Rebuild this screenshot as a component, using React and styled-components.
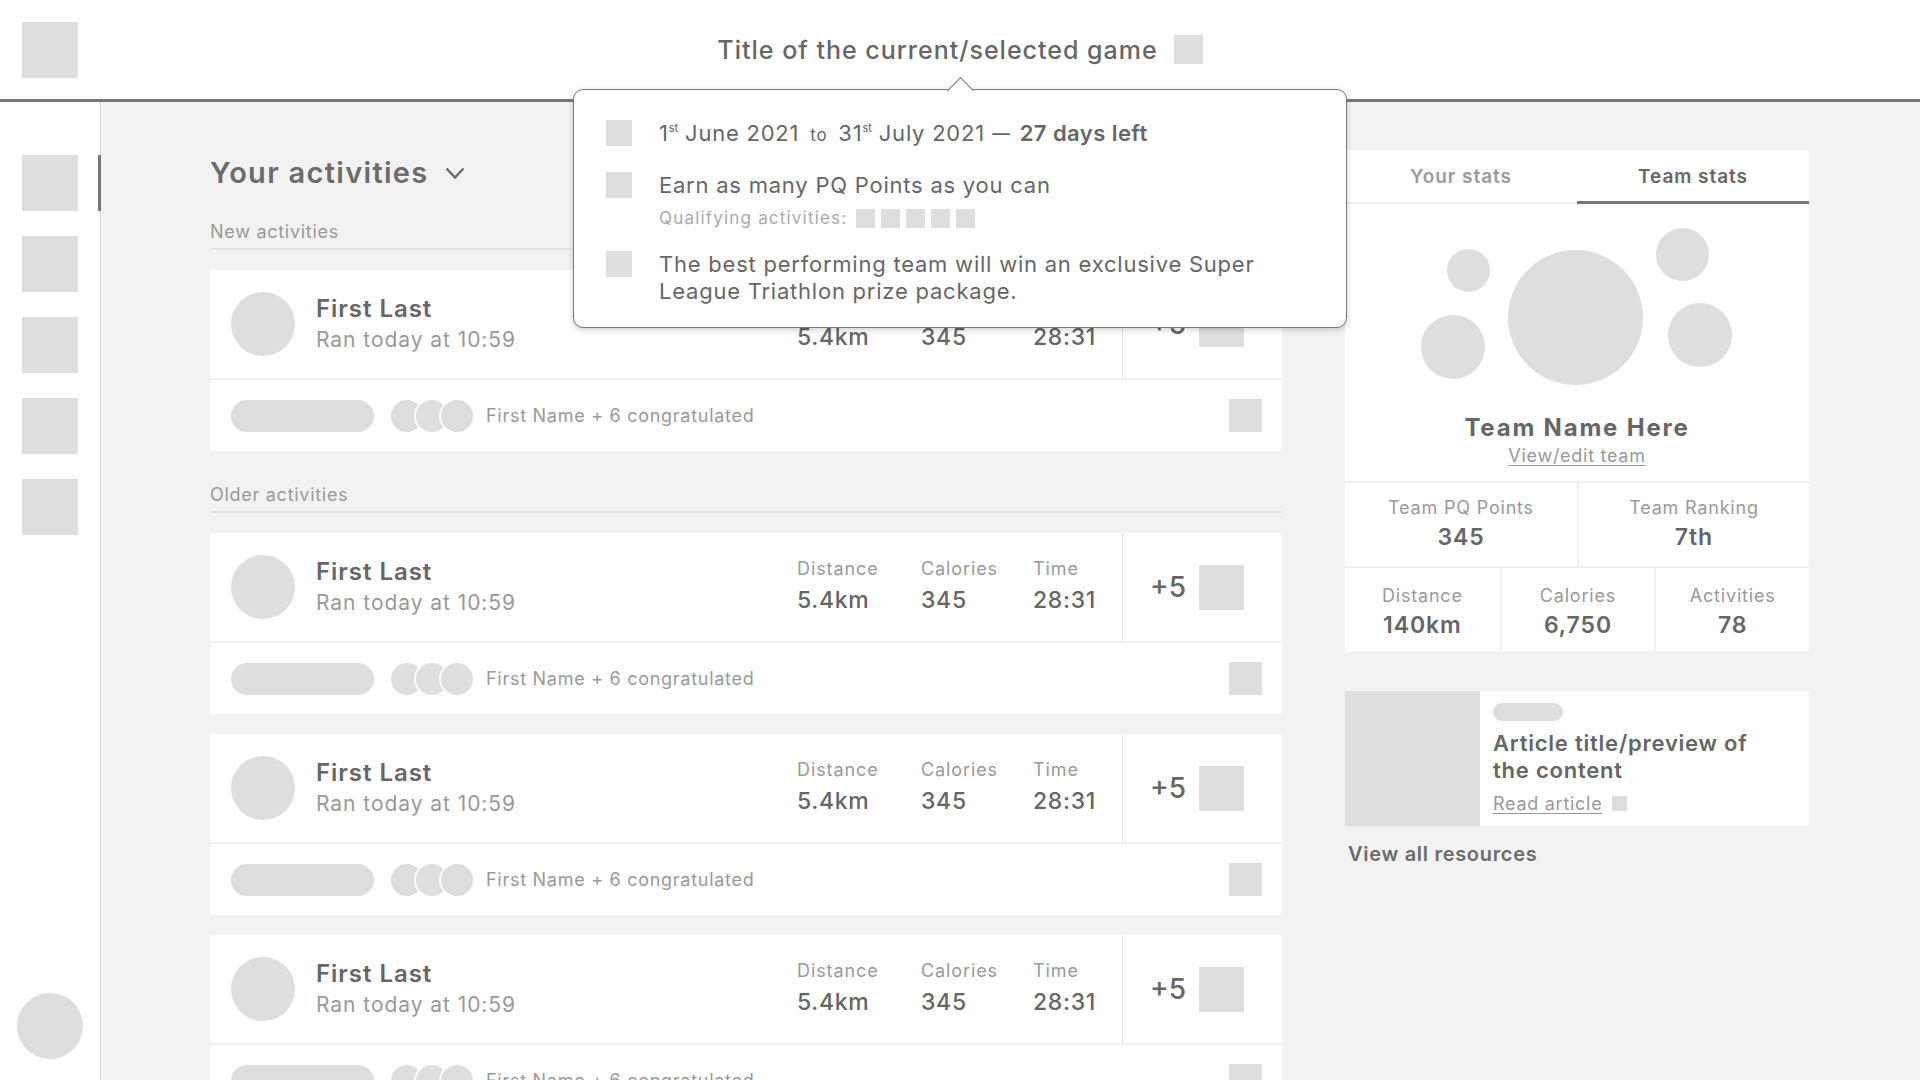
import React from "react";
import styled, { createGlobalStyle } from "styled-components";

const GlobalStyle = createGlobalStyle`
  * { box-sizing: border-box; }
  body {
    margin: 0;
    background: #f2f2f2;
    font-family: Inter, "Open Sans", Arial, sans-serif;
    color: #666;
    overflow: hidden;
  }
`;

const cards = [
  { id: 1, section: "new" },
  { id: 2, section: "old" },
  { id: 3, section: "old" },
  { id: 4, section: "old" },
];

const teamStats = [
  { label: "Distance", value: "140km" },
  { label: "Calories", value: "6,750" },
  { label: "Activities", value: "78" },
];

export default function App() {
  const renderCard = (item) => (
    <Card key={item.id}>
      <CardMain>
        <Avatar />
        <Who>
          <Name>First Last</Name>
          <Sub>Ran today at 10:59</Sub>
        </Who>
        <Stats>
          <div>
            <StatLabel>Distance</StatLabel>
            <StatValue>5.4km</StatValue>
          </div>
          <div>
            <StatLabel>Calories</StatLabel>
            <StatValue>345</StatValue>
          </div>
          <div>
            <StatLabel>Time</StatLabel>
            <StatValue>28:31</StatValue>
          </div>
        </Stats>
        <Points>
          <span>+5</span>
          <Block size={45} />
        </Points>
      </CardMain>
      <CardFoot>
        <Pill />
        <Faces>
          <Face />
          <Face />
          <Face />
        </Faces>
        <Congrats>First Name + 6 congratulated</Congrats>
        <Block size={33} />
      </CardFoot>
    </Card>
  );

  return (
    <>
      <GlobalStyle />
      <Page>
        <Header>
          <Block size={56} />
          <TitleGroup>
            <Title>Title of the current/selected game</Title>
            <Block size={29} />
          </TitleGroup>
          <div />
          <Popover>
            <PopRow>
              <Block size={26} />
              <PopText>
                1<sup>st</sup> June 2021 <small>to</small> 31<sup>st</sup> July 2021
                <Dash>—</Dash>
                <b>27 days left</b>
              </PopText>
            </PopRow>
            <PopRow>
              <Block size={26} />
              <div>
                <PopText>Earn as many PQ Points as you can</PopText>
                <Qualify>
                  <span>Qualifying activities:</span>
                  <Block size={19} />
                  <Block size={19} />
                  <Block size={19} />
                  <Block size={19} />
                  <Block size={19} />
                </Qualify>
              </div>
            </PopRow>
            <PopRow>
              <Block size={26} />
              <PopText>
                The best performing team will win an exclusive Super
                <br />
                League Triathlon prize package.
              </PopText>
            </PopRow>
          </Popover>
        </Header>

        <Body>
          <Sidebar>
            <NavIcon active />
            <NavIcon />
            <NavIcon />
            <NavIcon />
            <NavIcon />
            <Me />
          </Sidebar>

          <Main>
            <Activities>
              <Heading>
                Your activities
                <svg width="20" height="13" viewBox="0 0 20 13">
                  <polyline
                    points="1.5,1.5 10,10.5 18.5,1.5"
                    fill="none"
                    stroke="#6b6b6b"
                    strokeWidth="2.4"
                  />
                </svg>
              </Heading>
              <Section>
                <SectionLabel>New activities</SectionLabel>
                {cards.filter((c) => c.section === "new").map(renderCard)}
              </Section>
              <Section>
                <SectionLabel>Older activities</SectionLabel>
                {cards.filter((c) => c.section === "old").map(renderCard)}
              </Section>
            </Activities>

            <Aside>
              <StatsCard>
                <Tabs>
                  <Tab>Your stats</Tab>
                  <Tab active>Team stats</Tab>
                </Tabs>
                <Team>
                  <Cluster>
                    <Bubble d={135} x={163} y={46} />
                    <Bubble d={43} x={102} y={45} />
                    <Bubble d={64} x={76} y={111} />
                    <Bubble d={53} x={311} y={24} />
                    <Bubble d={64} x={323} y={99} />
                  </Cluster>
                  <TeamName>Team Name Here</TeamName>
                  <Underlined>View/edit team</Underlined>
                </Team>
                <StatGrid cols={2}>
                  <Cell>
                    <CellLabel>Team PQ Points</CellLabel>
                    <CellValue>345</CellValue>
                  </Cell>
                  <Cell>
                    <CellLabel>Team Ranking</CellLabel>
                    <CellValue>7th</CellValue>
                  </Cell>
                </StatGrid>
                <StatGrid cols={3} lower>
                  {teamStats.map((s) => (
                    <Cell key={s.label}>
                      <CellLabel>{s.label}</CellLabel>
                      <CellValue>{s.value}</CellValue>
                    </Cell>
                  ))}
                </StatGrid>
              </StatsCard>

              <Article>
                <Thumb />
                <ArticleBody>
                  <Tag />
                  <ArticleTitle>
                    Article title/preview of
                    <br />
                    the content
                  </ArticleTitle>
                  <ReadRow>
                    <Underlined>Read article</Underlined>
                    <Block size={15} />
                  </ReadRow>
                </ArticleBody>
              </Article>
              <ViewAll>View all resources</ViewAll>
            </Aside>
          </Main>
        </Body>
      </Page>
    </>
  );
}

const Page = styled.div`
  height: 100vh;
  overflow: hidden;
`;

const Block = styled.div`
  width: ${(p) => p.size}px;
  height: ${(p) => p.size}px;
  flex: none;
  background: #dedede;
`;

const Header = styled.header`
  position: relative;
  z-index: 2;
  height: 102px;
  background: #fff;
  border-bottom: 3px solid #777;
  display: grid;
  grid-template-columns: 1fr auto 1fr;
  align-items: center;
  padding: 0 22px;
`;

const TitleGroup = styled.div`
  display: flex;
  align-items: center;
  gap: 16px;
`;

const Title = styled.h1`
  margin: 0;
  font-size: 25px;
  line-height: 32px;
  font-weight: 500;
  letter-spacing: 0.04em;
  color: #666;
`;

const Popover = styled.div`
  position: absolute;
  top: 89px;
  left: 50%;
  margin-left: -387px;
  width: 774px;
  height: 239px;
  background: #fff;
  border: 1px solid #777;
  border-radius: 10px;
  box-shadow: 0 2px 6px rgba(0, 0, 0, 0.18);
  padding: 30px 32px 0;

  &::before {
    content: "";
    position: absolute;
    top: -9px;
    left: calc(50% - 9px);
    width: 18px;
    height: 18px;
    background: #fff;
    border-top: 1px solid #777;
    border-left: 1px solid #777;
    transform: rotate(45deg);
  }
`;

const PopRow = styled.div`
  display: flex;
  gap: 27px;
  margin-bottom: 23px;
`;

const PopText = styled.div`
  font-size: 22px;
  line-height: 27px;
  letter-spacing: 0.035em;
  color: #666;

  sup {
    font-size: 11px;
    vertical-align: 9px;
    line-height: 0;
    letter-spacing: 0;
  }
  small {
    font-size: 17px;
    margin: 0 4px;
  }
  b {
    font-weight: 600;
    letter-spacing: 0.02em;
  }
`;

const Dash = styled.span`
  display: inline-block;
  margin: 0 7px 0 5px;
  transform: scaleX(0.8);
`;

const Qualify = styled.div`
  display: flex;
  align-items: center;
  gap: 6px;
  margin-top: 9px;
  font-size: 17px;
  line-height: 20px;
  letter-spacing: 0.07em;
  color: #aaa;

  span {
    margin-right: 3px;
  }
`;

const Body = styled.div`
  display: flex;
  height: calc(100vh - 102px);
`;

const Sidebar = styled.nav`
  width: 101px;
  flex: none;
  background: #fff;
  border-right: 1px solid #cfcfcf;
  display: flex;
  flex-direction: column;
  align-items: center;
  gap: 25px;
  padding: 53px 0 21px;
`;

const NavIcon = styled.div`
  position: relative;
  width: 56px;
  height: 56px;
  background: #dedede;

  &::after {
    content: "";
    display: ${(p) => (p.active ? "block" : "none")};
    position: absolute;
    left: 76px;
    top: 0;
    width: 3px;
    height: 100%;
    background: #777;
  }
`;

const Me = styled.div`
  margin-top: auto;
  width: 66px;
  height: 66px;
  border-radius: 50%;
  background: #dedede;
`;

const Main = styled.main`
  flex: 1;
  display: flex;
  align-items: flex-start;
  gap: 63px;
  padding: 48px 0 0 109px;
`;

const Activities = styled.div`
  width: 1072px;
  flex: none;
  padding-top: 5px;
`;

const Heading = styled.h2`
  margin: 0;
  display: flex;
  align-items: center;
  gap: 16px;
  font-size: 29px;
  line-height: 36px;
  font-weight: 600;
  letter-spacing: 0.045em;
  color: #6b6b6b;
`;

const Section = styled.section`
  display: flex;
  flex-direction: column;
  gap: 20px;
  margin-top: 30px;

  & + & {
    margin-top: 33px;
  }
`;

const SectionLabel = styled.div`
  font-size: 18px;
  line-height: 22px;
  letter-spacing: 0.04em;
  color: #999;
  padding-bottom: 5px;
  border-bottom: 2px solid #e4e4e4;
`;

const Card = styled.div`
  background: #fff;
`;

const CardMain = styled.div`
  height: 110px;
  display: flex;
  align-items: center;
  padding-left: 21px;
  border-bottom: 2px solid #f0f0f0;
`;

const Avatar = styled.div`
  width: 64px;
  height: 64px;
  flex: none;
  border-radius: 50%;
  background: #dedede;
`;

const Who = styled.div`
  flex: 1;
  margin-left: 21px;
`;

const Name = styled.div`
  font-size: 24px;
  line-height: 30px;
  font-weight: 600;
  letter-spacing: 0.04em;
  color: #666;
`;

const Sub = styled.div`
  margin-top: 1px;
  font-size: 21px;
  line-height: 30px;
  letter-spacing: 0.045em;
  color: #999;
`;

const Stats = styled.div`
  display: grid;
  grid-template-columns: 124px 112px 89px;
  padding-bottom: 1px;
`;

const StatLabel = styled.div`
  font-size: 18px;
  line-height: 22px;
  letter-spacing: 0.05em;
  color: #999;
`;

const StatValue = styled.div`
  margin-top: 5px;
  font-size: 23px;
  line-height: 30px;
  font-weight: 500;
  letter-spacing: 0.03em;
  color: #666;
`;

const Points = styled.div`
  align-self: stretch;
  width: 160px;
  flex: none;
  display: flex;
  align-items: center;
  justify-content: center;
  gap: 13px;
  border-left: 1px solid #e2e2e2;
  font-size: 28px;
  font-weight: 500;
  color: #666;
  padding-right: 11px;
`;

const CardFoot = styled.div`
  height: 71px;
  display: flex;
  align-items: center;
  padding: 0 20px 0 21px;
`;

const Pill = styled.div`
  width: 143px;
  height: 32px;
  border-radius: 16px;
  background: #dedede;
`;

const Faces = styled.div`
  display: flex;
  margin-left: 17px;
`;

const Face = styled.div`
  width: 32px;
  height: 32px;
  border-radius: 50%;
  background: #dedede;

  & + & {
    margin-left: -7px;
    box-shadow: 0 0 0 2px #fff;
  }
`;

const Congrats = styled.div`
  flex: 1;
  margin-left: 13px;
  font-size: 18px;
  letter-spacing: 0.04em;
  color: #999;
`;

const Aside = styled.aside`
  width: 464px;
  flex: none;
`;

const StatsCard = styled.div`
  background: #fff;
`;

const Tabs = styled.div`
  display: flex;
  box-shadow: inset 0 -2px 0 #efefef;
`;

const Tab = styled.div`
  flex: 1;
  text-align: center;
  padding: 15px 0 12px;
  font-size: 19px;
  line-height: 24px;
  font-weight: 600;
  letter-spacing: 0.05em;
  color: ${(p) => (p.active ? "#666" : "#9a9a9a")};
  border-bottom: 3px solid ${(p) => (p.active ? "#777" : "transparent")};
`;

const Team = styled.div`
  display: flex;
  flex-direction: column;
  align-items: center;
  padding-bottom: 14px;
`;

const Cluster = styled.div`
  position: relative;
  width: 100%;
  height: 209px;
`;

const Bubble = styled.div`
  position: absolute;
  left: ${(p) => p.x}px;
  top: ${(p) => p.y}px;
  width: ${(p) => p.d}px;
  height: ${(p) => p.d}px;
  border-radius: 50%;
  background: #dedede;
`;

const TeamName = styled.div`
  font-size: 24px;
  line-height: 30px;
  font-weight: 700;
  letter-spacing: 0.075em;
  color: #666;
`;

const Underlined = styled.div`
  margin-top: 2px;
  font-size: 18px;
  line-height: 22px;
  letter-spacing: 0.04em;
  color: #999;
  text-decoration: underline;
  text-underline-offset: 3px;
`;

const StatGrid = styled.div`
  display: grid;
  grid-template-columns: repeat(${(p) => p.cols}, 1fr);
  border-top: 2px solid #efefef;

  & > div {
    padding-top: ${(p) => (p.lower ? 17 : 14)}px;
    padding-bottom: ${(p) => (p.lower ? 12 : 15)}px;
  }
`;

const Cell = styled.div`
  text-align: center;

  & + & {
    border-left: 2px solid #efefef;
  }
`;

const CellLabel = styled.div`
  font-size: 18px;
  line-height: 22px;
  letter-spacing: 0.045em;
  color: #999;
`;

const CellValue = styled.div`
  margin-top: 4px;
  font-size: 23px;
  line-height: 28px;
  font-weight: 600;
  letter-spacing: 0.04em;
  color: #666;
`;

const Article = styled.div`
  display: flex;
  height: 135px;
  margin-top: 40px;
  background: #fff;
`;

const Thumb = styled.div`
  width: 135px;
  flex: none;
  background: #dedede;
`;

const ArticleBody = styled.div`
  padding: 12px 0 0 13px;
`;

const Tag = styled.div`
  width: 70px;
  height: 18px;
  border-radius: 9px;
  background: #dedede;
`;

const ArticleTitle = styled.div`
  margin-top: 9px;
  font-size: 22px;
  line-height: 27px;
  font-weight: 600;
  letter-spacing: 0.035em;
  color: #666;
`;

const ReadRow = styled.div`
  display: flex;
  align-items: center;
  gap: 10px;
  margin-top: 7px;
`;

const ViewAll = styled.div`
  margin-top: 16px;
  padding-left: 3px;
  font-size: 20px;
  line-height: 24px;
  font-weight: 600;
  letter-spacing: 0.035em;
  color: #6b6b6b;
`;
